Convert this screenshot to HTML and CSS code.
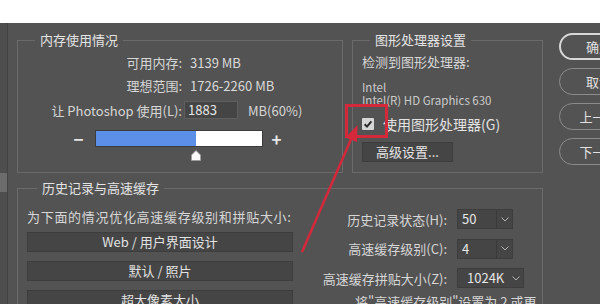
FILE: index.html
```html
<!DOCTYPE html>
<html lang="zh-CN">
<head>
    <meta charset="UTF-8">
    <title>首选项 - 性能</title>
    <link rel="stylesheet" href="styles.css">
</head>
<body>
    <div class="topbar"></div>
    <div class="window">
        <div class="sidebar"><div class="scroll-thumb"></div></div>

        <div class="main">
            <div class="top-row">
                <fieldset class="group group-mem">
                    <legend>内存使用情况</legend>
                    <div class="mem-grid">
                        <span class="label">可用内存:</span>
                        <span class="value">3139 MB</span>
                        <span class="label">理想范围:</span>
                        <span class="value">1726-2260 MB</span>
                        <span class="label">让 Photoshop 使用(L):</span>
                        <span class="mem-input-row">
                            <span class="text-input">1883</span>
                            <span class="unit">MB(60%)</span>
                        </span>
                    </div>
                    <div class="slider">
                        <span class="step">−</span>
                        <div class="track">
                            <div class="track-fill" style="width: 60%"></div>
                            <svg class="knob" style="left: 60%" width="10" height="11" viewBox="0 0 10 11">
                                <path d="M5 0.5 L9.5 5 L9.5 10.5 L0.5 10.5 L0.5 5 Z" fill="#fafafa" stroke="#9a9a9a" stroke-width="0.8"/>
                            </svg>
                        </div>
                        <span class="step">+</span>
                    </div>
                </fieldset>

                <fieldset class="group group-gpu">
                    <legend>图形处理器设置</legend>
                    <div class="gpu-body">
                        <div class="detect">检测到图形处理器:</div>
                        <div class="gpu-name">
                            <div>Intel</div>
                            <div>Intel(R) HD Graphics 630</div>
                        </div>
                        <div class="check-row">
                            <span class="checkbox">
                                <svg width="12" height="12" viewBox="0 0 12 12">
                                    <path d="M2.6 6.3 L5 8.6 L9.4 3.4" fill="none" stroke="#2a2a2a" stroke-width="2"/>
                                </svg>
                            </span>
                            <span>使用图形处理器(G)</span>
                        </div>
                        <div class="adv-btn">高级设置...</div>
                    </div>
                </fieldset>
            </div>

            <fieldset class="group group-hist">
                <legend>历史记录与高速缓存</legend>
                <div class="hist-body">
                    <div class="hist-left">
                        <div class="hist-hint">为下面的情况优化高速缓存级别和拼贴大小:</div>
                        <div class="preset-list">
                            <div class="preset">Web / 用户界面设计</div>
                            <div class="preset">默认 / 照片</div>
                            <div class="preset">超大像素大小</div>
                        </div>
                    </div>
                    <div class="hist-right">
                        <div class="hist-grid">
                            <span class="label">历史记录状态(H):</span>
                            <span class="combo">
                                <span class="combo-value">50</span>
                                <span class="combo-arrow"><svg width="8" height="5" viewBox="0 0 8 5"><polyline points="0.5,0.5 4,4 7.5,0.5" fill="none" stroke="#b4b4b4"/></svg></span>
                            </span>
                            <span class="label">高速缓存级别(C):</span>
                            <span class="combo">
                                <span class="combo-value">4</span>
                                <span class="combo-arrow"><svg width="8" height="5" viewBox="0 0 8 5"><polyline points="0.5,0.5 4,4 7.5,0.5" fill="none" stroke="#b4b4b4"/></svg></span>
                            </span>
                            <span class="label">高速缓存拼贴大小(Z):</span>
                            <span class="combo combo-wide">
                                <span class="combo-value">1024K</span>
                                <span class="combo-arrow"><svg width="8" height="5" viewBox="0 0 8 5"><polyline points="0.5,0.5 4,4 7.5,0.5" fill="none" stroke="#b4b4b4"/></svg></span>
                            </span>
                        </div>
                        <div class="hist-note">将"高速缓存级别"设置为 2 或更高以获得最佳的 GPU 性能。</div>
                    </div>
                </div>
            </fieldset>
        </div>

        <div class="actions">
            <div class="action action-primary">确定</div>
            <div class="action">取消</div>
            <div class="action">上一个</div>
            <div class="action">下一个</div>
        </div>
    </div>

    <!-- red annotation drawn over the dialog -->
    <svg class="annotation" width="600" height="304" viewBox="0 0 600 304">
        <rect x="346.5" y="105.5" width="40" height="31" fill="none" stroke="#d4283b" stroke-width="3"/>
        <line x1="302" y1="252" x2="352" y2="137" stroke="#d4283b" stroke-width="2.5"/>
        <polygon points="357.5,125 345.5,137.5 357,142" fill="#d4283b"/>
    </svg>
</body>
</html>
```

FILE: styles.css
```css
body {
    margin: 0;
    width: 600px;
    height: 304px;
    overflow: hidden;
    position: relative;
    background-color: #535353;
    font-family: "Noto Sans CJK SC", "Noto Sans", sans-serif;
    font-size: 13px;
    color: #d6d6d6;
}
.topbar {
    height: 23px;
    background-color: #fff;
}
.window {
    display: flex;
    height: 281px;
}
.sidebar {
    width: 7px;
    flex-shrink: 0;
    background-color: #4e4e4e;
    border-right: 1px solid #444;
}
.scroll-thumb {
    margin-top: 150px;
    height: 19px;
    background-color: #6c6c6c;
}
.main {
    margin-left: 9px;
    width: 526px;
    flex-shrink: 0;
}
.top-row {
    display: flex;
    gap: 9px;
    margin-top: 9px;
}
.group {
    margin: 0;
    padding: 0;
    min-width: 0;
    box-sizing: border-box;
    border: 1px solid #6a6a6a;
}
.group legend {
    margin-left: 17px;
    padding: 0 5px;
    line-height: 16px;
    color: #e4e4e4;
}
.group-mem {
    width: 326px;
    height: 141px;
}
.group-gpu {
    width: 191px;
    height: 141px;
}
.group-hist {
    width: 526px;
    height: 150px;
    margin-top: 7px;
}
.group-hist legend {
    margin-left: 19px;
}

/* memory */
.mem-grid {
    display: grid;
    grid-template-columns: 164px auto;
    grid-template-rows: 20px 20px 24px;
    row-gap: 3px;
    margin-top: 4px;
    align-items: center;
}
.label {
    text-align: right;
    white-space: nowrap;
}
.value {
    padding-left: 8px;
    color: #dadada;
}
.mem-input-row {
    display: flex;
    align-items: center;
    margin-left: 2px;
}
.text-input {
    width: 54px;
    height: 18px;
    box-sizing: border-box;
    padding-left: 3px;
    line-height: 16px;
    background-color: #454545;
    border: 1px solid #5f5f5f;
    color: #e6e6e6;
}
.unit {
    margin-left: 10px;
}
.slider {
    display: flex;
    align-items: center;
    gap: 11px;
    margin: 8px 0 0 55px;
}
.step {
    width: 11px;
    text-align: center;
    font-size: 17px;
    font-weight: bold;
    line-height: 17px;
    color: #e8e8e8;
}
.slider .step:last-child {
    margin-left: -3px;
}
.track {
    position: relative;
    width: 168px;
    height: 17px;
    box-sizing: border-box;
    border: 1px solid #3c3c3c;
    background-color: #fff;
}
.track-fill {
    height: 100%;
    background-color: #5b8fe8;
}
.knob {
    position: absolute;
    top: 19px;
    transform: translateX(-50%);
}

/* gpu */
.gpu-body {
    padding: 4px 0 0 9px;
}
.detect {
    line-height: 20px;
    white-space: nowrap;
}
.gpu-name {
    margin-top: 9px;
    display: flex;
    flex-direction: column;
    gap: 1px;
    font-size: 11.5px;
    line-height: 12px;
    color: #cacaca;
}
.check-row {
    display: flex;
    align-items: center;
    gap: 9px;
    height: 20px;
    margin-top: 8px;
    font-size: 14px;
    color: #e2e2e2;
}
.checkbox {
    width: 12px;
    height: 12px;
    background-color: #d6d6d6;
    border-radius: 1px;
}
.checkbox svg {
    display: block;
}
.adv-btn {
    width: 91px;
    height: 20px;
    margin-top: 8px;
    box-sizing: border-box;
    background-color: #454545;
    border: 1px solid #3d3d3d;
    text-align: center;
    line-height: 18px;
    color: #e6e6e6;
}

/* history */
.hist-body {
    display: flex;
}
.hist-left {
    width: 266px;
    margin-left: 9px;
    flex-shrink: 0;
}
.hist-hint {
    margin-top: 11px;
    line-height: 20px;
    letter-spacing: 0.7px;
    white-space: nowrap;
}
.preset-list {
    display: flex;
    flex-direction: column;
    gap: 9px;
    margin-top: 5px;
}
.preset {
    height: 20px;
    box-sizing: border-box;
    background-color: #454545;
    border: 1px solid #3d3d3d;
    text-align: center;
    line-height: 18px;
    color: #e2e2e2;
}
.hist-right {
    width: 241px;
    margin-left: 7px;
}
.hist-grid {
    display: grid;
    grid-template-columns: 147px auto;
    column-gap: 10px;
    row-gap: 9.5px;
    margin-top: 13px;
    align-items: center;
    justify-items: start;
}
.hist-grid .label {
    justify-self: end;
}
.combo {
    display: flex;
    width: 56px;
    height: 20px;
    box-sizing: border-box;
    background-color: #454545;
    border: 1px solid #3d3d3d;
}
.combo-value {
    flex: 1;
    padding-left: 4px;
    line-height: 18px;
    color: #e6e6e6;
}
.combo-arrow {
    width: 15px;
    display: flex;
    align-items: center;
    justify-content: center;
    border-left: 1px solid #3a3a3a;
}
.combo-wide {
    width: 67px;
}
.combo-wide .combo-value {
    padding-left: 9px;
}
.combo-wide .combo-arrow {
    border-left: none;
}
.hist-note {
    margin-top: 6px;
    padding-left: 55px;
    line-height: 16px;
}

/* dialog buttons */
.actions {
    display: flex;
    flex-direction: column;
    gap: 8px;
    margin-left: 16px;
    padding-top: 10px;
    flex-shrink: 0;
}
.action {
    width: 80px;
    height: 27px;
    box-sizing: border-box;
    border: 1px solid #8c8c8c;
    border-radius: 14px;
    text-align: center;
    line-height: 25px;
    color: #e2e2e2;
}
.action-primary {
    border: 2px solid #d8d8d8;
    line-height: 23px;
}

.annotation {
    position: absolute;
    top: 0;
    left: 0;
    pointer-events: none;
}
```
